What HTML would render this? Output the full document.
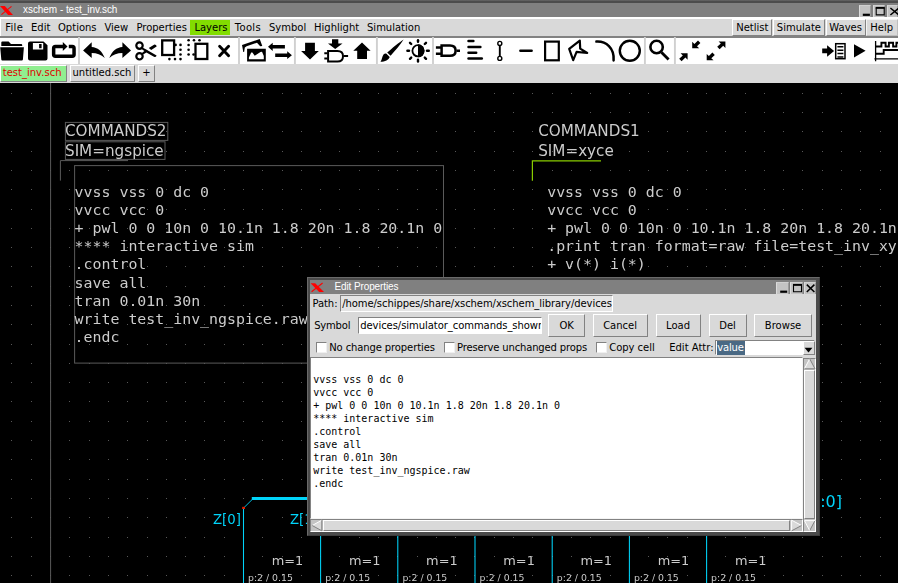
<!DOCTYPE html>
<html><head><meta charset="utf-8"><title>xschem - test_inv.sch</title>
<style>
html,body{margin:0;padding:0;}
body{width:898px;height:583px;overflow:hidden;background:#000;position:relative;font-family:"DejaVu Sans","Liberation Sans",sans-serif;}
.abs{position:absolute;}
#titlebar{left:0;top:0;width:898px;height:17px;background:#808080;}
#titlebar .topline{left:0;top:0;width:898px;height:3.5px;background:linear-gradient(#6e6e6e 0,#4c4c4c 1.2px,#4c4c4c 2.6px,#808080 3.5px);}
.ttl{color:#fff;font-family:"Liberation Sans",sans-serif;white-space:nowrap;}
#menubar{left:0;top:17px;width:898px;height:20px;background:#d9d9d9;}
.mi{position:absolute;top:20px;height:15px;line-height:15px;font-size:10px;color:#000;white-space:nowrap;}
#toolbar{left:0;top:37.6px;width:898px;height:26.4px;background:#fff;}
#tabrow{left:0;top:64px;width:898px;height:19px;background:#d9d9d9;}
.tab{position:absolute;top:65px;height:17px;box-sizing:border-box;border:1px solid;border-color:#fff #828282 #828282 #fff;font-size:10px;line-height:14px;white-space:nowrap;background:#d9d9d9;color:#000;}
#canvas{left:0;top:83px;width:898px;height:500px;background:#000;overflow:hidden;}
.ct{position:absolute;white-space:nowrap;color:#ccc;font-family:"DejaVu Sans",sans-serif;line-height:1;}
.mono{font-family:"DejaVu Sans Mono","Liberation Mono",monospace;white-space:pre !important;}
.wb{background:#c3c3c3;box-sizing:border-box;border-left:1.5px solid #dcdcdc;border-top:1px solid #d0d0d0;border-right:1px solid #9a9a9a;}
.mbtn{position:absolute;z-index:2;top:18.5px;height:17.5px;box-sizing:border-box;border:1.3px solid;border-color:#fff #828282 #828282 #fff;background:#d9d9d9;font-size:10px;line-height:15px;text-align:center;white-space:nowrap;color:#000;}

#dlg{left:306.5px;top:276.5px;width:513.2px;height:259.3px;background:#4a4a4a;}
#dlg .in{left:3.5px;top:3.5px;width:506.2px;height:252px;background:#d9d9d9;}
.dl{position:absolute;font-size:10px;line-height:12px;white-space:nowrap;color:#000;}
.ent{position:absolute;box-sizing:border-box;border:1.3px solid;border-color:#828282 #fff #fff #828282;font-size:10px;line-height:12px;white-space:nowrap;overflow:hidden;color:#000;}
.btn{position:absolute;box-sizing:border-box;border:1.4px solid;border-color:#fff #828282 #828282 #fff;background:#d9d9d9;font-size:10px;line-height:12px;text-align:center;white-space:nowrap;color:#000;}
.cb{position:absolute;box-sizing:border-box;width:10.8px;height:10.8px;background:#fff;border:1.3px solid;border-color:#828282 #f0f0f0 #f0f0f0 #828282;}
pre{margin:0;}
</style></head><body>
<!-- TITLE BAR -->
<div id="titlebar" class="abs"><div class="topline abs"></div></div>
<div class="abs ttl" id="wtitle" style="left:23px;top:2px;font-size:10px;line-height:15px;letter-spacing:-0.05px">xschem - test_inv.sch</div>
<svg class="abs" style="left:0;top:0" width="20" height="17"><path d="M0 6 H4.8 L13 15 H8.2 Z" fill="#f00"/><path d="M1.4 14.6 L11.5 6.3" stroke="#f00" stroke-width="1.1" fill="none"/></svg>
<!-- window buttons -->
<div class="abs wb" style="left:859px;top:5px;width:12.3px;height:12px;"></div>
<div class="abs wb" style="left:873px;top:5px;width:12.4px;height:12px;"></div>
<div class="abs wb" style="left:887px;top:5px;width:11px;height:12px;"></div>
<svg class="abs" style="left:855px;top:0" width="43" height="17" viewBox="855 0 43 17"><rect x="862.8" y="13.7" width="7.1" height="2.2" fill="#000"/><path d="M876.2 8 H884.2 V14.9 H876.2 Z" fill="none" stroke="#000" stroke-width="1.1"/><rect x="875.7" y="6.9" width="9" height="1.8" fill="#000"/><path d="M890.4 8 L899 15 M890.4 15 L899 8" stroke="#000" stroke-width="1.5" fill="none"/></svg>
<!-- right menu buttons -->
<div class="mbtn" style="left:732.3px;width:40px;">Netlist</div>
<div class="mbtn" style="left:773.2px;width:51.4px;">Simulate</div>
<div class="mbtn" style="left:825.6px;width:40px;">Waves</div>
<div class="mbtn" style="left:866px;width:31.5px;border-color:#f3f3f3 #bdbdbd #bdbdbd #f3f3f3">Help</div>
<!-- MENU BAR -->
<div id="menubar" class="abs"></div>
<div class="abs" style="left:0;top:17px;width:898px;height:1.8px;background:#fff"></div>
<div class="abs" style="left:0;top:36.1px;width:898px;height:1.5px;background:#828282"></div>
<div class="abs" style="left:0;top:17px;width:1.2px;height:19px;background:#fff"></div>
<div class="abs" style="left:190px;top:20px;width:40.4px;height:15px;background:#82dc00"></div>
<div class="mi" id="m0" style="left:5.2px;letter-spacing:0.3px">File</div>
<div class="mi" id="m1" style="left:31px">Edit</div>
<div class="mi" id="m2" style="left:58px">Options</div>
<div class="mi" id="m3" style="left:104.4px">View</div>
<div class="mi" id="m4" style="left:136.4px">Properties</div>
<div class="mi" id="m5" style="left:194.4px">Layers</div>
<div class="mi" id="m6" style="left:234.8px;letter-spacing:0.3px">Tools</div>
<div class="mi" id="m7" style="left:269px">Symbol</div>
<div class="mi" id="m8" style="left:314px">Highlight</div>
<div class="mi" id="m9" style="left:367px">Simulation</div>
<!-- TOOLBAR -->
<div id="toolbar" class="abs"></div>
<svg class="abs" style="left:0;top:37px" width="898" height="27" viewBox="0 37 898 27">
<g fill="#d0d0d0"><rect x="78.05" y="37" width="1.9" height="27"/><rect x="238.05" y="37" width="1.9" height="27"/><rect x="293.95" y="37" width="1.9" height="27"/><rect x="375.95" y="37" width="1.9" height="27"/><rect x="432.05" y="37" width="1.9" height="27"/><rect x="643.95" y="37" width="1.9" height="27"/><rect x="673.95" y="37" width="1.9" height="27"/></g>
<!-- open folder -->
<path d="M2.3 41.6 H8.6 L11 44 H21.2 Q22.2 44 22.2 45 V45.9 H1.3 V42.6 Q1.3 41.6 2.3 41.6 Z M0.2 47.2 H23.9 L22.9 59.5 Q22.8 60.5 21.8 60.5 H2.3 Q1.4 60.5 1.3 59.5 Z" fill="#000"/>
<!-- floppy -->
<path d="M30 41.4 H43.5 L47.5 45.2 V58.5 Q47.5 60.5 45.5 60.5 H30 Q28 60.5 28 58.5 V43.4 Q28 41.4 30 41.4 Z M32.9 43 V49.6 H43.2 V43 Z M39.1 44 H41.6 V48.2 H39.1 Z" fill="#000" fill-rule="evenodd"/>
<!-- reload loop -->
<path d="M63 46.6 H55.4 Q53.65 46.6 53.65 48.4 V54.5 Q53.65 56.2 55.4 56.2 H72.3 Q74.05 56.2 74.05 54.5 V48.4 Q74.05 46.6 72.3 46.6 H68.8" fill="none" stroke="#000" stroke-width="3.5"/>
<path d="M62.8 42 L67.5 46.4 L62.8 50.9 Z" fill="#000"/>
<!-- undo -->
<path d="M83.1 50.4 L91.7 42.2 L91.7 46.9 C97.5 47.2 102.2 51 104.8 58 C101 54.6 96.8 53.1 91.7 53 L91.7 57.9 Z" fill="#000"/>
<!-- redo -->
<path d="M131.0 50.4 L122.4 42.2 L122.4 46.9 C116.6 47.2 111.9 51 109.3 58 C113.1 54.6 117.3 53.1 122.4 53 L122.4 57.9 Z" fill="#000"/>
<!-- scissors -->
<g fill="none" stroke="#000" stroke-width="2.2"><circle cx="139.5" cy="45.6" r="3.2"/><circle cx="139.5" cy="56.3" r="3.2"/></g>
<path d="M142 47.2 L146.2 49.4 L156.6 55.4 Q156.4 57 154.4 57 L146.4 52.6 L142.4 55 L141.6 53.2 L144.4 51 L141.2 48.8 Z" fill="#000"/>
<path d="M148.8 47.9 L154.4 44.5 Q156.6 44.6 156.6 46.5 L151.2 50 Z" fill="#000"/>
<!-- copy -->
<rect x="162.2" y="40.4" width="11.9" height="14.6" fill="none" stroke="#000" stroke-width="2.3"/>
<g fill="#000"><circle cx="175.6" cy="44.9" r="1.3"/><circle cx="180.5" cy="44.9" r="1.3"/><circle cx="180.5" cy="49.7" r="1.3"/><circle cx="180.5" cy="54.5" r="1.3"/><circle cx="180.5" cy="59.1" r="1.3"/><circle cx="175" cy="59.1" r="1.3"/><circle cx="169.4" cy="59.1" r="1.3"/></g>
<!-- paste -->
<rect x="195.5" y="43.8" width="11.8" height="15.2" fill="none" stroke="#000" stroke-width="2.3"/>
<g fill="#000"><circle cx="188.6" cy="40.2" r="1.3"/><circle cx="194" cy="40.2" r="1.3"/><circle cx="199.5" cy="40.2" r="1.3"/><circle cx="188.6" cy="45" r="1.3"/><circle cx="188.6" cy="49.8" r="1.3"/><circle cx="188.6" cy="54.5" r="1.3"/><circle cx="193.6" cy="54.5" r="1.3"/></g>
<!-- delete x -->
<path d="M219.6 46.2 L228.6 55.7 M228.6 46.2 L219.6 55.7" stroke="#000" stroke-width="2.9" stroke-linecap="round" fill="none"/>
<!-- images -->
<path d="M242 45 L259.7 39 L262.3 45.9 L260.2 46.3 L257 42.7 L246.6 46.3 L244.8 47.4 L244.1 51.9 L243.3 51.9 Z" fill="#000"/>
<path d="M247.1 48.7 H265.8 V61.4 H247.1 Z M248.9 59.3 H263.8 V56 L262 51.8 L260.5 52 L254.7 55.8 L252.4 52.4 L251.2 52.4 L248.9 57.5 Z" fill="#000" fill-rule="evenodd"/>
<!-- swap arrows -->
<path d="M268 46.8 L272.7 42.7 V44.9 H284.9 V48.6 H272.7 V50.9 Z" fill="#000"/>
<path d="M291.9 55.2 L287.2 51.2 V53.4 H275.2 V57 H287.2 V59 Z" fill="#000"/>
<!-- down arrow -->
<path d="M305.1 42.7 H314.9 V51 H318.8 L310 59.4 L301.1 51 H305.1 Z" fill="#000"/>
<!-- descend symbol -->
<path d="M332 39.3 H338.3 V43.5 H342.5 L335.2 48.9 L328 43.5 H332 Z" fill="#000"/>
<path d="M328.1 51 H337.5 Q343 51 343 56.2 Q343 61.5 337.5 61.5 H328.1 Z" fill="none" stroke="#000" stroke-width="2"/>
<path d="M324.3 53.3 H327.5 M324.3 58.6 H327.5 M343.5 56.1 H348.1" stroke="#000" stroke-width="2" fill="none"/>
<!-- up arrow -->
<path d="M362 42.4 L370.6 50.8 H367 V58.9 H357.2 V50.8 H353.3 Z" fill="#000"/>
<!-- brush -->
<path d="M403.6 39.6 C399 42.5 392 48.5 387.2 52.6 L390.6 55.8 C395 51 400.5 44.5 403.6 39.6 Z" fill="#000"/>
<path d="M386.2 53.6 L389.7 56.9 C388.8 60 385 61.6 380.5 61.8 C382.2 59.8 382 56.5 383.5 54.6 C384.2 53.8 385.2 53.4 386.2 53.6 Z" fill="#000"/>
<!-- brightness -->
<circle cx="418" cy="50.8" r="5.6" fill="#fff" stroke="#000" stroke-width="1.8"/>
<path d="M418 44.3 A6.5 6.5 0 0 1 418 57.3 Z" fill="#000"/>
<g stroke="#000" stroke-width="2.4" stroke-linecap="round" fill="none"><path d="M418 40.2 V41.8"/><path d="M418 59.8 V61.6"/><path d="M407.4 50.8 H409"/><path d="M427 50.8 H428.8"/><path d="M410 42.8 L411.2 44"/><path d="M424.8 44 L426 42.8"/><path d="M410 58.8 L411.2 57.6"/><path d="M424.8 57.6 L426 58.8"/></g>
<!-- and gate -->
<path d="M441.6 45.6 H450 Q455.6 45.6 455.6 50.7 Q455.6 55.8 450 55.8 H441.6 Z" fill="none" stroke="#000" stroke-width="2.5"/>
<path d="M435.9 47.5 H441 M435.9 53.7 H441 M456.5 50.8 H460" stroke="#000" stroke-width="2.5" fill="none"/>
<!-- text lines -->
<g stroke="#000" stroke-width="2.5" stroke-linecap="round" fill="none"><path d="M468.5 41.1 H473.4"/><path d="M468.5 47 H480.4"/><path d="M468.5 52.8 H476.2"/><path d="M468.5 58.5 H481.8"/></g>
<!-- wire -->
<path d="M499.8 45 V57" stroke="#000" stroke-width="1.9" fill="none"/>
<circle cx="499.8" cy="43.4" r="2" fill="#fff" stroke="#000" stroke-width="1.4"/><circle cx="499.8" cy="58.4" r="2" fill="#fff" stroke="#000" stroke-width="1.4"/>
<!-- line -->
<path d="M520.4 50.8 H531.6" stroke="#000" stroke-width="2.5" stroke-linecap="round" fill="none"/>
<!-- rect -->
<rect x="545.1" y="41.6" width="13.7" height="18.7" fill="none" stroke="#000" stroke-width="2.2"/>
<!-- polygon -->
<path d="M579.8 40.6 L569.2 48.8 L573.2 60.2 L576.6 51.8 L587.2 53 L580.2 48.6 Z" fill="none" stroke="#000" stroke-width="2.2" stroke-linejoin="round"/>
<!-- arc -->
<path d="M596.4 41.6 C606 41 614.5 48 613.6 60.4" fill="none" stroke="#000" stroke-width="2.5" stroke-linecap="round"/>
<!-- circle -->
<circle cx="629.8" cy="50.8" r="10" fill="none" stroke="#000" stroke-width="2.4"/>
<!-- magnifier -->
<circle cx="656.6" cy="47" r="6.2" fill="none" stroke="#000" stroke-width="2.6"/>
<path d="M661.4 52.2 L668.6 59.6" stroke="#000" stroke-width="2.8" fill="none"/>
<!-- zoom in (compress) arrows -->
<path d="M692.2 48.2 V41.8 L694.4 44 L698 40.6 L700.4 43 L697 46.2 L699.2 48.2 Z" fill="#000"/>
<path d="M687.6 53.3 V59.7 L685.4 57.6 L681.6 61.2 L679.2 58.8 L682.8 55.4 L680.6 53.3 Z" fill="#000"/>
<!-- zoom out (expand) arrows -->
<path d="M725.4 41.6 V48 L723.2 45.8 L719.6 49.2 L717.2 46.8 L720.8 43.6 L718.6 41.6 Z" fill="#000"/>
<path d="M706.7 60.3 V53.9 L708.9 56 L712.4 52.6 L714.8 55 L711.3 58.2 L713.5 60.3 Z" fill="#000"/>
<!-- netlist -->
<path d="M822.2 48.6 H827.1 V45.2 L834.1 51 L827.1 56.8 V53.3 H822.2 Z" fill="#000"/>
<rect x="835.7" y="43.7" width="9.3" height="15" fill="#fff" stroke="#000" stroke-width="1.5"/>
<path d="M837.4 46.8 H843.4 M837.4 50.3 H843.4 M837.4 53.6 H843.4 M837.4 57 H843.4" stroke="#000" stroke-width="1.5" fill="none"/>
<!-- play -->
<path d="M854 44.2 V57.5 L865.6 50.8 Z" fill="#000"/>
<!-- waves -->
<path d="M875.6 41.1 V61.3 M874.4 58.9 H898" stroke="#000" stroke-width="1.3" fill="none"/>
<path d="M875.6 46.5 H881.4 V42.8 H885.6 V46.5 H888.9 V42.8 H893.1 V46.5 H896.4 V42.8 H899" stroke="#000" stroke-width="1.9" fill="none"/>
<path d="M875.6 53.8 H883.7 V50 H899" stroke="#000" stroke-width="1.9" fill="none"/>
</svg>
<!-- TAB ROW -->
<div id="tabrow" class="abs"></div>
<div class="tab" id="t0" style="left:0;width:67px;background:#90ee90;color:#e00000;padding-left:1.8px;">test_inv.sch</div>
<div class="tab" id="t1" style="left:69.5px;width:65.5px;padding-left:2px;">untitled.sch</div>
<div class="tab" id="t2" style="left:138px;width:17px;text-align:center;">+</div>
<!-- CANVAS -->
<div id="canvas" class="abs">
<svg class="abs" style="left:0;top:0" width="898" height="500">
<defs><g id="gr"><rect x="11" width="1" height="1"/><rect x="31" width="1" height="1"/><rect x="50" width="1" height="1"/><rect x="69" width="1" height="1"/><rect x="89" width="1" height="1"/><rect x="108" width="1" height="1"/><rect x="127" width="1" height="1"/><rect x="147" width="1" height="1"/><rect x="166" width="1" height="1"/><rect x="185" width="1" height="1"/><rect x="204" width="1" height="1"/><rect x="224" width="1" height="1"/><rect x="243" width="1" height="1"/><rect x="262" width="1" height="1"/><rect x="282" width="1" height="1"/><rect x="301" width="1" height="1"/><rect x="320" width="1" height="1"/><rect x="339" width="1" height="1"/><rect x="359" width="1" height="1"/><rect x="378" width="1" height="1"/><rect x="397" width="1" height="1"/><rect x="417" width="1" height="1"/><rect x="436" width="1" height="1"/><rect x="455" width="1" height="1"/><rect x="474" width="1" height="1"/><rect x="494" width="1" height="1"/><rect x="513" width="1" height="1"/><rect x="532" width="1" height="1"/><rect x="552" width="1" height="1"/><rect x="571" width="1" height="1"/><rect x="590" width="1" height="1"/><rect x="610" width="1" height="1"/><rect x="629" width="1" height="1"/><rect x="648" width="1" height="1"/><rect x="667" width="1" height="1"/><rect x="687" width="1" height="1"/><rect x="706" width="1" height="1"/><rect x="725" width="1" height="1"/><rect x="745" width="1" height="1"/><rect x="764" width="1" height="1"/><rect x="783" width="1" height="1"/><rect x="802" width="1" height="1"/><rect x="822" width="1" height="1"/><rect x="841" width="1" height="1"/><rect x="860" width="1" height="1"/><rect x="880" width="1" height="1"/></g></defs>
<g fill="#585858"><use href="#gr" y="10"/><use href="#gr" y="29"/><use href="#gr" y="48"/><use href="#gr" y="68"/><use href="#gr" y="87"/><use href="#gr" y="106"/><use href="#gr" y="126"/><use href="#gr" y="145"/><use href="#gr" y="164"/><use href="#gr" y="183"/><use href="#gr" y="203"/><use href="#gr" y="222"/><use href="#gr" y="241"/><use href="#gr" y="261"/><use href="#gr" y="280"/><use href="#gr" y="299"/><use href="#gr" y="318"/><use href="#gr" y="338"/><use href="#gr" y="357"/><use href="#gr" y="376"/><use href="#gr" y="396"/><use href="#gr" y="415"/><use href="#gr" y="434"/><use href="#gr" y="454"/><use href="#gr" y="473"/><use href="#gr" y="492"/></g>
</svg>
</div>
<div id="cv" class="abs" style="left:0;top:83px;width:898px;height:500px;overflow:hidden;will-change:transform;">
<div class="abs" style="left:0;top:-83px;width:898px;height:583px;">
<div class="abs" style="left:0;top:83px;width:898px;height:500px;">
<!-- canvas drawings (page coords via viewBox) -->
<svg class="abs" style="left:0;top:0" width="898" height="500" viewBox="0 83 898 500">
<g fill="none" stroke="#5a5a5a" stroke-width="1">
<path d="M50.6 83 V583"/>
<rect x="65.4" y="122.4" width="102.4" height="18"/>
<rect x="65.4" y="141.8" width="99.6" height="17.6"/>
<path d="M128 160.6 H60.4 V180.6"/>
<rect x="74.6" y="165.6" width="368.9" height="197.5"/>
</g>
<path d="M601 160.8 H532.4 V180.8" fill="none" stroke="#88cc00" stroke-width="1.2"/>
<g stroke="#00d4fa" fill="none">
<path d="M251.8 498.5 H310" stroke-width="3"/>
<path d="M252.3 499.4 L244 507.6" stroke-width="0.9"/>
<path d="M243.5 508 V583 M320.6 536 V583 M397.8 536 V583 M475 536 V583 M552.2 536 V583 M629.4 536 V583 M706.6 536 V583" stroke-width="1.05"/>
</g>
<rect x="242.2" y="506.8" width="2.8" height="2.2" fill="#e02000"/>
</svg>
</div>
<div class="ct" style="left:65px;top:123.1px;font-size:15.2px;line-height:16px;">COMMANDS2</div>
<div class="ct" style="left:65px;top:142.9px;font-size:15.2px;line-height:16px;">SIM=ngspice</div>
<div class="ct" style="left:538.2px;top:123.4px;font-size:15.2px;line-height:16px;">COMMANDS1</div>
<div class="ct" style="left:538.2px;top:143.2px;font-size:15.2px;line-height:16px;">SIM=xyce</div>
<pre class="ct mono" id="code1" style="left:74.6px;top:183.3px;font-size:14.9px;line-height:18.05px;">vvss vss 0 dc 0
vvcc vcc 0
+ pwl 0 0 10n 0 10.1n 1.8 20n 1.8 20.1n 0
**** interactive sim
.control
save all
tran 0.01n 30n
write test_inv_ngspice.raw
.endc</pre>
<pre class="ct mono" id="code2" style="left:547.2px;top:183.3px;font-size:14.9px;line-height:18.05px;">vvss vss 0 dc 0
vvcc vcc 0
+ pwl 0 0 10n 0 10.1n 1.8 20n 1.8 20.1n 0
.print tran format=raw file=test_inv_xyce.raw
+ v(*) i(*)</pre>
<div class="ct" style="left:213px;top:511.9px;font-size:13.3px;line-height:16px;color:#00d4fa;">Z[0]</div>
<div class="ct" style="left:290px;top:511.9px;font-size:13.3px;line-height:16px;color:#00d4fa;">Z[1]</div>
<div class="ct" style="left:792.8px;top:492px;font-size:16px;line-height:19px;color:#00d4fa;">Z[6:0]</div>
<div class="ct" style="left:271.7px;top:554.3px;font-size:12.9px;line-height:14px;">m=1</div>
<div class="ct" style="left:248.0px;top:572px;font-size:9.35px;line-height:11px;">p:2 / 0.15</div>
<div class="ct" style="left:348.9px;top:554.3px;font-size:12.9px;line-height:14px;">m=1</div>
<div class="ct" style="left:325.2px;top:572px;font-size:9.35px;line-height:11px;">p:2 / 0.15</div>
<div class="ct" style="left:426.1px;top:554.3px;font-size:12.9px;line-height:14px;">m=1</div>
<div class="ct" style="left:402.4px;top:572px;font-size:9.35px;line-height:11px;">p:2 / 0.15</div>
<div class="ct" style="left:503.3px;top:554.3px;font-size:12.9px;line-height:14px;">m=1</div>
<div class="ct" style="left:479.6px;top:572px;font-size:9.35px;line-height:11px;">p:2 / 0.15</div>
<div class="ct" style="left:580.5px;top:554.3px;font-size:12.9px;line-height:14px;">m=1</div>
<div class="ct" style="left:556.8px;top:572px;font-size:9.35px;line-height:11px;">p:2 / 0.15</div>
<div class="ct" style="left:657.7px;top:554.3px;font-size:12.9px;line-height:14px;">m=1</div>
<div class="ct" style="left:633.9px;top:572px;font-size:9.35px;line-height:11px;">p:2 / 0.15</div>
<div class="ct" style="left:734.9px;top:554.3px;font-size:12.9px;line-height:14px;">m=1</div>
<div class="ct" style="left:711.1px;top:572px;font-size:9.35px;line-height:11px;">p:2 / 0.15</div>
</div>
</div>

<!-- DIALOG -->
<div id="dlg" class="abs"><div class="abs" style="left:0;top:0;width:513.2px;height:259.3px;box-sizing:border-box;border:1.3px solid #6a6a6a;border-right-color:#3c3c3c;border-bottom-color:#3c3c3c"></div><div class="in abs"></div></div>
<div class="abs" style="left:310px;top:280px;width:506.2px;height:13.6px;background:#808080"></div>
<svg class="abs" style="left:310px;top:280px" width="20" height="14" viewBox="310 280 20 14"><path d="M310.6 283.2 H315.2 L324 292 H319.2 Z" fill="#f00"/><path d="M311.6 291.8 L322.6 283" stroke="#f00" stroke-width="1.1" fill="none"/></svg>
<div class="abs ttl" style="left:334.4px;top:280px;font-size:10px;line-height:13px;letter-spacing:-0.1px">Edit Properties</div>
<div class="abs wb" style="left:776.4px;top:282px;width:12.3px;height:12px;"></div>
<div class="abs wb" style="left:790.4px;top:282px;width:12.3px;height:12px;"></div>
<div class="abs wb" style="left:804.4px;top:282px;width:11.8px;height:12px;"></div>
<svg class="abs" style="left:775px;top:280px" width="42" height="15" viewBox="775 280 42 15"><rect x="780.2" y="290.6" width="7" height="2.2" fill="#000"/><path d="M793.5 285 H801.5 V291.8 H793.5 Z" fill="none" stroke="#000" stroke-width="1.1"/><rect x="793" y="283.9" width="9" height="1.8" fill="#000"/><path d="M806.8 284.6 L814.4 292 M806.8 292 L814.4 284.6" stroke="#000" stroke-width="1.5" fill="none"/></svg>
<div class="dl" style="left:312.4px;top:298.2px;letter-spacing:-0.05px">Path:</div>
<div class="ent" style="left:339.6px;top:294.8px;width:273.6px;height:17.3px;background:#e4e4e4;padding:2.2px 0 0 1.6px;letter-spacing:-0.07px">/home/schippes/share/xschem/xschem_library/devices</div>
<div class="dl" style="left:314.2px;top:320.2px;letter-spacing:-0.2px">Symbol</div>
<div class="ent" style="left:357.6px;top:316.7px;width:184.4px;height:17.3px;background:#fff;padding:2.2px 0 0 1.6px;letter-spacing:-0.057px">devices/simulator_commands_shown.sym</div>
<div class="btn" style="left:548.4px;top:314.4px;width:36.6px;height:22.2px;padding-top:4.4px;">OK</div>
<div class="btn" style="left:592.5px;top:314.4px;width:55.2px;height:22.2px;padding-top:4.4px;">Cancel</div>
<div class="btn" style="left:655.6px;top:314.4px;width:45px;height:22.2px;padding-top:4.4px;">Load</div>
<div class="btn" style="left:708.6px;top:314.4px;width:38px;height:22.2px;padding-top:4.4px;">Del</div>
<div class="btn" style="left:754px;top:314.4px;width:58.1px;height:22.2px;padding-top:4.4px;">Browse</div>
<div class="cb" style="left:316px;top:342.2px;"></div>
<div class="dl" style="left:329.2px;top:342.4px;letter-spacing:-0.11px">No change properties</div>
<div class="cb" style="left:444.1px;top:342.2px;"></div>
<div class="dl" style="left:457px;top:342.4px;letter-spacing:-0.15px">Preserve unchanged props</div>
<div class="cb" style="left:596.2px;top:342.2px;"></div>
<div class="dl" style="left:609.2px;top:342.4px;letter-spacing:-0.03px">Copy cell</div>
<div class="dl" style="left:669.2px;top:342.4px;">Edit Attr:</div>
<!-- combobox -->
<div class="ent" style="left:715.2px;top:339.7px;width:100.2px;height:15.8px;background:#fff;"></div>
<div class="abs" style="left:716.7px;top:341px;width:28.1px;height:13.6px;background:#4a6984;"></div>
<div class="dl" style="left:717.2px;top:342.4px;color:#fff;letter-spacing:-0.15px">value</div>
<div class="btn" style="left:803px;top:341px;width:11.8px;height:13.7px;border-width:1px;"></div>
<svg class="abs" style="left:803px;top:341px" width="12" height="14" viewBox="803 341 12 14"><path d="M804.6 347.8 H812.4 L808.5 352.4 Z" fill="#000"/></svg>
<!-- text area -->
<div class="abs" style="left:310.4px;top:357.4px;width:492.8px;height:161.6px;box-sizing:border-box;background:#fff;border:1.3px solid;border-color:#828282 #f4f4f4 #f4f4f4 #828282;"></div>
<pre class="abs mono" id="dtext" style="left:313.2px;top:359.9px;font-size:10px;line-height:13px;color:#000;">

vvss vss 0 dc 0
vvcc vcc 0
+ pwl 0 0 10n 0 10.1n 1.8 20n 1.8 20.1n 0
**** interactive sim
.control
save all
tran 0.01n 30n
write test_inv_ngspice.raw
.endc</pre>
<!-- v scrollbar -->
<div class="abs" style="left:803.4px;top:357.6px;width:12.6px;height:174.2px;background:#c3c3c3;box-sizing:border-box;border:1px solid;border-color:#828282 #fff #fff #828282;"></div>
<div class="btn" style="left:804.4px;top:369.8px;width:10.6px;height:149px;border-width:1px;"></div>
<svg class="abs" style="left:803px;top:357px" width="14" height="176" viewBox="803 357 14 176">
<path d="M809.7 358.8 L815 368.8 H804.4 Z" fill="#d9d9d9"/><path d="M809.7 358.8 L804.4 368.8" stroke="#fff" stroke-width="1" fill="none"/><path d="M809.7 358.8 L815 368.8 H804.4" stroke="#828282" stroke-width="1" fill="none"/>
<path d="M804.4 520.6 H815 L809.7 530.6 Z" fill="#d9d9d9"/><path d="M815 520.6 L809.7 530.6" stroke="#828282" stroke-width="1" fill="none"/><path d="M809.7 530.6 L804.4 520.6 H815" stroke="#fff" stroke-width="1" fill="none"/>
</svg>
<!-- h scrollbar -->
<div class="abs" style="left:310.4px;top:519.2px;width:492.6px;height:12.6px;background:#c3c3c3;box-sizing:border-box;border:1px solid;border-color:#828282 #fff #fff #828282;"></div>
<div class="btn" style="left:322.8px;top:520.2px;width:467.4px;height:10.6px;border-width:1px;"></div>
<svg class="abs" style="left:310px;top:519px" width="494" height="14" viewBox="310 519 494 14">
<path d="M312.2 525.5 L321.8 520.2 V530.8 Z" fill="#d9d9d9"/><path d="M312.2 525.5 L321.8 520.2" stroke="#fff" stroke-width="1" fill="none"/><path d="M321.8 520.2 V530.8 L312.2 525.5" stroke="#828282" stroke-width="1" fill="none"/>
<path d="M791.6 520.2 L801.6 525.5 L791.6 530.8 Z" fill="#d9d9d9"/><path d="M791.6 530.8 V520.2 L801.6 525.5" stroke="#fff" stroke-width="1" fill="none"/><path d="M801.6 525.5 L791.6 530.8" stroke="#828282" stroke-width="1" fill="none"/>
</svg>
</body></html>
